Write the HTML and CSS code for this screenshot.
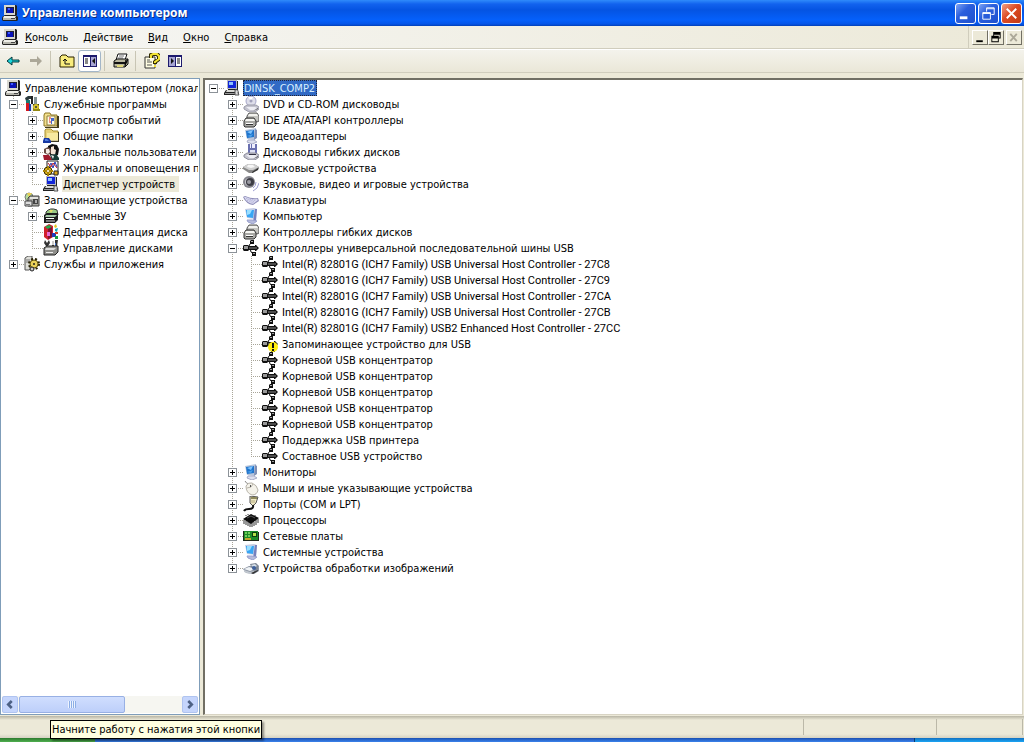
FILE: index.html
```html
<!DOCTYPE html>
<html lang="ru">
<head>
<meta charset="utf-8">
<title>Управление компьютером</title>
<link rel="stylesheet" href="styles.css">
</head>
<body>
<svg class="sprite" aria-hidden="true">
<symbol id="pc" viewBox="0 0 16 16"><path d="M2 0h12l1 1v9l-1 1H3l-1-1z" fill="#222"/><path d="M2 0h11v10H2z" fill="#d8d8d0"/><path d="M4 2h8v6H4z" fill="#223"/><path d="M5 3h6v5H5z" fill="#0a12b8"/><path d="M6 3h2v2H6z" fill="#3c5cff"/><path d="M1 11h14l1 1v3l-1 1H1l-1-1v-2z" fill="#222"/><path d="M2 11h12l-1 2H1z" fill="#eeeee8"/><path d="M1 13h13v2H1z" fill="#b4b4ac"/><path d="M9 13h4v1H9z" fill="#444"/></symbol>
<symbol id="dev" viewBox="0 0 16 16"><path d="M3 0h10v9H3z" fill="#b8b8c0"/><path d="M13 1h1v9H4V9h9z" fill="#222"/><path d="M4 1h8v7H4z" fill="#1226d8"/><path d="M5 2h4v3H5z" fill="#8fc0ff"/><path d="M2 10h11l2 3v2H0v-2z" fill="#222"/><path d="M3 10h9l1 2H2z" fill="#d8d8d4"/><path d="M1 13h10v1H1z" fill="#999"/><path d="M11 10q4-1 3 3l1 2h-4z" fill="#ddd" stroke="#555"/></symbol>
<symbol id="tools" viewBox="0 0 16 16"><path d="M1 2l3-2h5v3H5L4 5H2z" fill="#2b3a3c"/><path d="M2 4h4v5H2z" fill="#177a76"/><path d="M7 0h2v8H7z" fill="#222"/><path d="M10 1h3v7h-3z" fill="#839296"/><path d="M2 7h3v8H2z" fill="#d41820"/><path d="M5 8h3v7H5z" fill="#1540ad"/><path d="M7 8h2v7H7z" fill="#e6e6e6"/><path d="M9 8h6v7H9z" fill="#312e08"/><circle cx="12" cy="11" r="3" fill="#d9c52d"/><circle cx="12" cy="11" r="1" fill="#333"/><path d="M9 13h7v2H9z" fill="#958a13"/></symbol>
<symbol id="log" viewBox="0 0 16 16"><path d="M1 3l1-2h5l1 2h6v11H1z" fill="#f3e08d" stroke="#8c7423"/><path d="M4 4h8v9H4z" fill="#fffbe5" stroke="#8e7f3c"/><path d="M6 6h2M6 8h1M6 10h2" stroke="#d22"/><path d="M8 6h3v3H9v3H8z" fill="#46c"/><path d="M14 4h2v12H2v-1h12z" fill="#423a1a"/></symbol>
<symbol id="folder" viewBox="0 0 16 16"><path d="M2 2l1-1h5l2 2h5v9H2z" fill="#e7d179" stroke="#a8902f"/><path d="M4 5h11v7H4z" fill="#f7e99f"/><path d="M15 4h1v10H7v-1h8z" fill="#3d3924"/><path d="M1 10h5l2 3v2H0v-2z" fill="#1838a2"/><path d="M2 11h2l2 2H2z" fill="#4f7ddf"/></symbol>
<symbol id="users" viewBox="0 0 16 16"><path d="M5 2l4-2 5 1 2 4-1 6-5 2-5-4z" fill="#101010"/><path d="M8 3l3-1v3l2 1-1 5-4-1z" fill="#f4e3d4"/><path d="M1 5l4-2 3 2v4l-3 2-4-2z" fill="#6a4c43"/><path d="M3 5h3l1 3-2 2-2-1z" fill="#f6ece3"/><path d="M0 11h6l4 5H1z" fill="#9f1a2b"/><path d="M7 11l6-1 3 4v2H9z" fill="#173b35"/><path d="M8 11l3 1-1 3z" fill="#eee"/></symbol>
<symbol id="perf" viewBox="0 0 16 16"><path d="M4 1h11v13H4z" fill="#fff" stroke="#222"/><path d="M5 9l3-6 2 5 2-6 2 5" fill="none" stroke="#243bbc"/><path d="M5 3l3 4 2-4 4 5" fill="none" stroke="#c21f2b"/><circle cx="5" cy="11" r="4" fill="#ddb51e" stroke="#332800"/><path d="M4 6h2v10H4zM0 10h10v2H0z" fill="#a88308"/><circle cx="5" cy="11" r="1" fill="#fff"/><path d="M11 11h4v4h-4z" fill="#d9a51a" stroke="#222"/></symbol>
<symbol id="storage" viewBox="0 0 16 16"><circle cx="5" cy="5" r="4" fill="#b5db9a" stroke="#777"/><path d="M5 5L3 1h5z" fill="#e7ce51"/><path d="M4 6l2-2h9v10H4z" fill="#a7a7a2" stroke="#444"/><path d="M6 5h8v2H6z" fill="#e3e3df"/><path d="M9 7h5v5H9z" fill="#444"/><path d="M11 8h2v3h-2z" fill="#aaa"/><path d="M1 9h7v5H1z" fill="#ddd" stroke="#444"/><path d="M2 12h4v1H2z" fill="#777"/></symbol>
<symbol id="removable" viewBox="0 0 16 16"><path d="M3 4q4-5 11-2l1 5H3z" fill="#99c984" stroke="#333"/><path d="M6 2h4L8 5z" fill="#e4df6a"/><path d="M1 7l3-2h11v7l-3 3H1z" fill="#1c1c1c"/><path d="M3 7h11l-2 2H2z" fill="#a5c9a6"/><path d="M3 10h8v1H3z" fill="#fff"/><path d="M3 12h9v2H3z" fill="#777"/></symbol>
<symbol id="defrag" viewBox="0 0 16 16"><path d="M1 3l5-3 4 2v11l-5 3-4-3z" fill="#d11e2c"/><path d="M2 3l4-2 3 2-4 2z" fill="#21ab49"/><path d="M5 5l4-2v10l-4 2z" fill="#7b1230"/><path d="M4 8h3v4H4z" fill="#e869d3"/><path d="M11 2l2-2 1 3-2 1z" fill="#e2c51a"/><path d="M12 5l3-1-1 4-2-1z" fill="#1ab"/><path d="M9 9h4v4H9z" fill="#243bbb"/><path d="M12 12h3v3h-3z" fill="#1a9d3f"/><path d="M12 8h3v2h-3z" fill="#c42"/></symbol>
<symbol id="diskmgmt" viewBox="0 0 16 16"><path d="M2 0l2 3 2-3 1 3-2 3H3L1 3zM9 1h2v7H9zM12 0h3l-1 7h-2z" fill="#333"/><path d="M9 1h2v4H9z" fill="#ccc"/><path d="M12 3h1v4h-1z" fill="#3b68bb"/><path d="M1 8l3-2h11v6l-3 3H1z" fill="#8e8e8a" stroke="#222"/><path d="M3 8h10l-2 2H2z" fill="#ddd"/><path d="M3 12h7v1H3z" fill="#eee"/></symbol>
<symbol id="services" viewBox="0 0 16 16"><path d="M1 2l3-2h4v12l-3 2H1z" fill="#deded8" stroke="#555"/><path d="M2 4h4M2 6h4" stroke="#777"/><circle cx="10" cy="8" r="5" fill="none" stroke="#282205" stroke-width="2" stroke-dasharray="2 2"/><circle cx="10" cy="8" r="4" fill="#ead25a" stroke="#5f5210"/><circle cx="10" cy="8" r="1" fill="#222"/><circle cx="8" cy="13" r="2" fill="#ccc" stroke="#222"/></symbol>
<symbol id="dvd" viewBox="0 0 16 16"><circle cx="8" cy="5" r="5" fill="#dedeea" stroke="#a6a6c8"/><path d="M8 5L5 1h5z" fill="#fff"/><circle cx="8" cy="5" r="1" fill="#fff" stroke="#8686a8"/><path d="M1 11l3-2h9l3 2v2l-4 3H6l-5-3z" fill="#c4c4cf" stroke="#9a9aa8"/><path d="M3 11h9l2 1-3 2H7z" fill="#eeeef4"/><path d="M10 15l5-3v1z" fill="#555"/></symbol>
<symbol id="ctrl" viewBox="0 0 16 16"><path d="M4 4l2-3h8l2 3v5l-2 1H4z" fill="#c4c4c0" stroke="#555"/><path d="M6 2h8l1 2H5z" fill="#f2f2ee"/><path d="M1 9l2-3h8l2 3v4l-2 2H2l-1-1z" fill="#a8a8a4" stroke="#333"/><path d="M3 7h8l1 2H2z" fill="#f6f6f2"/><path d="M3 11h7v1H3z" fill="#fff"/><path d="M3 12h7v1H3z" fill="#333"/></symbol>
<symbol id="mon" viewBox="0 0 16 16"><path d="M2 2l11-2 1 9-3 3-7-1z" fill="#b8c6dc"/><path d="M3 3l8-1v7l-7 1z" fill="#1f74cc"/><path d="M4 4l6-2-2 4z" fill="#7ec4ff"/><path d="M4 8l4 1 2-3z" fill="#4aa0ea"/><path d="M12 1l2 1v8l-3 2z" fill="#7f8fb4"/><path d="M5 12h6l3 2-5 2-5-2z" fill="#dcdfee" stroke="#a9adc8"/></symbol>
<symbol id="comp" viewBox="0 0 16 16"><path d="M2 1l9-1 3 1-1 10-9-1z" fill="#c3cce4"/><path d="M3 2l8 0-1 8-6-1z" fill="#38a6f4"/><path d="M4 2h5l-2 4-3 1z" fill="#9adfff"/><path d="M12 1l2 0-1 12-3 1z" fill="#7681bd"/><path d="M4 12h5l5 1-4 3-5-2z" fill="#b6bbdc" stroke="#9aa0cc"/></symbol>
<symbol id="floppy" viewBox="0 0 16 16"><path d="M5 0h9v11H5z" fill="#6a70b0"/><path d="M7 0h1v4H7zM9 0h3v4H9z" fill="#eef"/><path d="M7 6h5v4H7z" fill="#dde0f4"/><path d="M1 11l3-2h9l3 2v2l-4 3H6l-5-3z" fill="#c4c4cf" stroke="#8c8c9a"/><path d="M3 11h9l2 1-3 2H7z" fill="#eeeef4"/><path d="M6 10h7v1H6z" fill="#334"/><path d="M10 15l5-3v1z" fill="#444"/></symbol>
<symbol id="disk" viewBox="0 0 16 16"><path d="M0 7l5-3h6l5 3v2l-6 4H6L0 9z" fill="#8a8a8a"/><path d="M0 7l5-3h6l5 3-6 3H6z" fill="#d0d0d0"/><path d="M5 5h5l2 2-4 1-4-1z" fill="#f6f6f6"/><path d="M9 12l6-4v2l-6 3z" fill="#333"/></symbol>
<symbol id="sound" viewBox="0 0 16 16"><circle cx="6" cy="6" r="6" fill="#85858d"/><circle cx="6" cy="6" r="4" fill="#c8c8d0"/><circle cx="7" cy="6" r="4" fill="#3d3d45"/><circle cx="6" cy="6" r="2" fill="#9a9aa2"/><path d="M10 12q3-2 3-6M10 15q5-2 6-8" fill="none" stroke="#a1a1d2"/></symbol>
<symbol id="kbd" viewBox="0 0 16 16"><path d="M0 5l2-1q7 3 13 2l1 3-6 4q-7-1-10-8z" fill="#8e8db8"/><path d="M1 5l2 0q6 3 11 2l1 1-5 4q-6-1-9-7z" fill="#dadaf0"/><path d="M3 6l8 4M4 8l6 3M7 7l6 2" stroke="#a9a9d2" stroke-dasharray="1 1"/></symbol>
<symbol id="usb" viewBox="0 0 16 16"><path d="M5 8l2-4 2-2M7 8l1 4 3 2" fill="none" stroke="#111"/><path d="M0 6l1-1h4l1 1h6V5h1l3 3-3 3h-1V10H6l-1 1H1l-1-1z" fill="#111"/><path d="M1 6h4v3H1z" fill="#999"/><path d="M6 8h8" stroke="#8a8a8a"/><path d="M7 1l1-1h3v4H8L7 3z" fill="#111"/><path d="M8 1h2v1H8z" fill="#aaa"/><path d="M9 12h4v4H9z" fill="#111"/><path d="M10 13h2v1h-2z" fill="#999"/></symbol>
<symbol id="usbwarn" viewBox="0 0 16 16"><use href="#usb"/><circle cx="11" cy="11" r="5" fill="#ffee12"/><path d="M10 7h2v5h-2zM10 13h2v2h-2z" fill="#111"/></symbol>
<symbol id="mouse" viewBox="0 0 16 16"><path d="M2 1q1 3 5 3" fill="none" stroke="#8b8b88"/><path d="M3 6q2-4 6-3 5 2 6 7-1 5-6 5-6-2-6-9z" fill="#f4f2ea" stroke="#b6b2a8"/><path d="M4 8q5 0 6-4" fill="none" stroke="#b6b2a8"/><path d="M7 5h1v2H7z" fill="#555"/></symbol>
<symbol id="port" viewBox="0 0 16 16"><path d="M7 0l8 1-2 6-3 3-3-3z" fill="#efe8c4" stroke="#555"/><path d="M8 1h6v2H8z" fill="#8f8a5b"/><path d="M9 4v3M11 4v3" stroke="#b5ad80"/><path d="M10 9q1 4-4 4-4 0-5 2" fill="none" stroke="#111" stroke-width="2"/></symbol>
<symbol id="cpu" viewBox="0 0 16 16"><path d="M1 8v4M3 9v4M5 10v4M7 11v4M9 11v4M11 10v4M13 8v5M15 7v4" stroke="#333"/><path d="M0 7l8-5 8 4-8 6z" fill="#0c0c0c"/><path d="M4 6l4-2 4 2" fill="none" stroke="#555"/><path d="M3 4v-1M5 3V2M12 4V3" stroke="#333"/></symbol>
<symbol id="net" viewBox="0 0 16 16"><path d="M1 3h14v9H1z" fill="#1d8a28"/><path d="M0 3h1v10H0zM15 4h1v9h-1zM1 12h14v1H1z" fill="#1f2a1c"/><path d="M2 4h2v2H2zM5 4h2v2H5zM2 7h2v2H2zM5 7h2v2H5z" fill="#6fcf58"/><path d="M9 4h5v5H9z" fill="#0c4010"/><path d="M10 5h3v3h-3z" fill="#b8e24a"/><path d="M2 10h6v2H2z" fill="#c2a62c"/></symbol>
<symbol id="cam" viewBox="0 0 16 16"><path d="M0 9l6-3h9l1 2v3l-5 3-8-1z" fill="#8e97a5"/><path d="M7 4l6-1 3 3-2 5-5-2z" fill="#7c8592"/><path d="M8 5l4-1 2 2-3 2z" fill="#d8e0e8"/><path d="M1 9l5-2 6 2-5 2z" fill="#f0f3f6"/><path d="M1 10l6 2 4-1v2l-4 1-6-2z" fill="#c2c8d0"/><circle cx="11" cy="8" r="2" fill="#3d5f9a"/><path d="M8 13l7-3v1l-5 3z" fill="#333"/></symbol>
</svg>

<div class="window">
  <header class="titlebar">
    <svg class="icon"><use href="#pc"/></svg>
    <h1>Управление компьютером</h1>
    <button class="cap" aria-label="Свернуть"><svg viewBox="0 0 20 20"><path d="M4 13h8v3H4z" fill="#fff"/></svg></button>
    <button class="cap" aria-label="Восстановить"><svg viewBox="0 0 20 20"><path d="M8 8V4h8v7h-3M8 5h8M4 9h8v7H4zM4 10h8" fill="none" stroke="#fff"/></svg></button>
    <button class="cap close" aria-label="Закрыть"><svg viewBox="0 0 20 20"><path d="M5 5l10 10M15 5L5 15" stroke="#fff" stroke-width="2"/></svg></button>
  </header>

  <nav class="menubar">
    <svg class="icon"><use href="#pc"/></svg>
    <button class="menu"><u>К</u>онсоль</button>
    <button class="menu"><u>Д</u>ействие</button>
    <button class="menu"><u>В</u>ид</button>
    <button class="menu"><u>О</u>кно</button>
    <button class="menu"><u>С</u>правка</button>
    <div class="mdi">
      <button aria-label="Свернуть окно"><svg viewBox="0 0 14 14"><path d="M3 10h7v2H3z"/></svg></button>
      <button aria-label="Восстановить окно"><svg viewBox="0 0 14 14"><path d="M4 1h8v7h-2V7h1V4H5v1H4zM2 5h8v7H2zM3 8v3h6V8z" fill-rule="evenodd"/></svg></button>
      <button class="off" aria-label="Закрыть окно" disabled><svg viewBox="0 0 14 14"><path d="M3 3l7 8M10 3l-7 8" stroke="#aca899" stroke-width="2"/></svg></button>
    </div>
  </nav>

  <div class="toolbar">
    <button class="tool" aria-label="Назад"><svg class="icon" viewBox="0 0 16 16"><path d="M2 8l5-4v3h7v2H7v3z" fill="#19d6dc" stroke="#06383b"/></svg></button>
    <button class="tool" aria-label="Вперед"><svg class="icon" viewBox="0 0 16 16"><path d="M14 8L9 3v3H2v3h7v4z" fill="#aca899"/></svg></button>
    <span class="sep"></span>
    <button class="tool" aria-label="Вверх"><svg class="icon" viewBox="0 0 16 16"><path d="M1 4l2-2h4l2 2h6v10H1z" fill="#f8ec7d" stroke="#292100"/><path d="M6 6v5h5M4 8l2-2 2 2" fill="none" stroke="#111"/></svg></button>
    <button class="tool pressed" aria-label="Дерево консоли" aria-pressed="true"><svg class="icon" viewBox="0 0 16 16"><path d="M1 2h14v12H1z" fill="#1d1a6d"/><path d="M2 4h6v9H2z" fill="#fff"/><path d="M9 4h5v9H9z" fill="#a7a5d2"/><path d="M3 6h3M3 8h3M3 10h3" stroke="#111"/><path d="M10 8l3-3v6z" fill="#111"/></svg></button>
    <span class="sep"></span>
    <button class="tool" aria-label="Печать"><svg class="icon" viewBox="0 0 16 16"><path d="M5 1h9l-2 6H3z" fill="#fff" stroke="#111"/><path d="M6 3h5M5 5h5" stroke="#777"/><path d="M1 8l3-2h11v5l-3 3H1z" fill="#b7b59e" stroke="#111"/><path d="M1 9h11v2H1z" fill="#111"/><path d="M4 12h6v2H4z" fill="#e0d878"/><path d="M12 8l3-2M12 14V9l3-2" stroke="#111"/></svg></button>
    <span class="sep"></span>
    <button class="tool" aria-label="Справка"><svg class="icon" viewBox="0 0 16 16"><path d="M1 4h10v11H1z" fill="#fffde2" stroke="#333"/><path d="M3 7h3M3 9h5M3 12h5" stroke="#555"/><path d="M7 5V2l2-1h4l2 2v3l-4 3v2" fill="none" stroke="#322c00" stroke-width="4"/><path d="M7 5V2l2-1h4l2 2v3l-4 3v1M10 13h2" fill="none" stroke="#f4e535" stroke-width="2"/></svg></button>
    <button class="tool" aria-label="Панель действий"><svg class="icon" viewBox="0 0 16 16"><path d="M1 2h14v12H1z" fill="#1d1a6d"/><path d="M2 4h6v9H2z" fill="#a7a5d2"/><path d="M9 4h5v9H9z" fill="#fff"/><path d="M10 6h3M10 8h3M10 10h3" stroke="#111"/><path d="M7 8L4 5v6z" fill="#111"/></svg></button>
  </div>

  <main class="panes">
    <section class="pane console">
      <ul class="tree">
        <li class="root"><div class="row"><svg class="icon"><use href="#pc"/></svg><span class="label">Управление компьютером (локаль</span></div>
          <ul class="flat">
            <li><div class="row"><span class="cell"><button class="toggle minus" aria-label="Свернуть"></button></span><svg class="icon"><use href="#tools"/></svg><span class="label">Служебные программы</span></div>
              <ul>
                <li><div class="row"><span class="cell"><button class="toggle" aria-label="Развернуть"></button></span><svg class="icon"><use href="#log"/></svg><span class="label">Просмотр событий</span></div></li>
                <li><div class="row"><span class="cell"><button class="toggle" aria-label="Развернуть"></button></span><svg class="icon"><use href="#folder"/></svg><span class="label">Общие папки</span></div></li>
                <li><div class="row"><span class="cell"><button class="toggle" aria-label="Развернуть"></button></span><svg class="icon"><use href="#users"/></svg><span class="label">Локальные пользователи</span></div></li>
                <li><div class="row"><span class="cell"><button class="toggle" aria-label="Развернуть"></button></span><svg class="icon"><use href="#perf"/></svg><span class="label">Журналы и оповещения пр</span></div></li>
                <li><div class="row"><span class="cell"></span><svg class="icon"><use href="#dev"/></svg><span class="label current">Диспетчер устройств</span></div></li>
              </ul></li>
            <li><div class="row"><span class="cell"><button class="toggle minus" aria-label="Свернуть"></button></span><svg class="icon"><use href="#storage"/></svg><span class="label">Запоминающие устройства</span></div>
              <ul>
                <li><div class="row"><span class="cell"><button class="toggle" aria-label="Развернуть"></button></span><svg class="icon"><use href="#removable"/></svg><span class="label">Съемные ЗУ</span></div></li>
                <li><div class="row"><span class="cell"></span><svg class="icon"><use href="#defrag"/></svg><span class="label">Дефрагментация диска</span></div></li>
                <li><div class="row"><span class="cell"></span><svg class="icon"><use href="#diskmgmt"/></svg><span class="label">Управление дисками</span></div></li>
              </ul></li>
            <li><div class="row"><span class="cell"><button class="toggle" aria-label="Развернуть"></button></span><svg class="icon"><use href="#services"/></svg><span class="label">Службы и приложения</span></div></li>
          </ul></li>
      </ul>
      <div class="scrollbar">
        <button class="arrow" aria-label="Влево"><svg viewBox="0 0 16 16"><path d="M10 4L6 8l4 4" fill="none" stroke="#4d6185" stroke-width="3"/></svg></button>
        <div class="track"><div class="thumb"><span class="grip"></span></div></div>
        <button class="arrow" aria-label="Вправо"><svg viewBox="0 0 16 16"><path d="M6 4l4 4-4 4" fill="none" stroke="#4d6185" stroke-width="3"/></svg></button>
      </div>
    </section>

    <section class="pane devices">
      <ul class="tree">
        <li class="root"><div class="row"><span class="cell"><button class="toggle minus" aria-label="Свернуть"></button></span><svg class="icon"><use href="#dev"/></svg><span class="label selected">DINSK_COMP2</span></div>
          <ul>
            <li><div class="row"><span class="cell"><button class="toggle" aria-label="Развернуть"></button></span><svg class="icon"><use href="#dvd"/></svg><span class="label">DVD и CD-ROM дисководы</span></div></li>
            <li><div class="row"><span class="cell"><button class="toggle" aria-label="Развернуть"></button></span><svg class="icon"><use href="#ctrl"/></svg><span class="label">IDE ATA/ATAPI контроллеры</span></div></li>
            <li><div class="row"><span class="cell"><button class="toggle" aria-label="Развернуть"></button></span><svg class="icon"><use href="#mon"/></svg><span class="label">Видеоадаптеры</span></div></li>
            <li><div class="row"><span class="cell"><button class="toggle" aria-label="Развернуть"></button></span><svg class="icon"><use href="#floppy"/></svg><span class="label">Дисководы гибких дисков</span></div></li>
            <li><div class="row"><span class="cell"><button class="toggle" aria-label="Развернуть"></button></span><svg class="icon"><use href="#disk"/></svg><span class="label">Дисковые устройства</span></div></li>
            <li><div class="row"><span class="cell"><button class="toggle" aria-label="Развернуть"></button></span><svg class="icon"><use href="#sound"/></svg><span class="label">Звуковые, видео и игровые устройства</span></div></li>
            <li><div class="row"><span class="cell"><button class="toggle" aria-label="Развернуть"></button></span><svg class="icon"><use href="#kbd"/></svg><span class="label">Клавиатуры</span></div></li>
            <li><div class="row"><span class="cell"><button class="toggle" aria-label="Развернуть"></button></span><svg class="icon"><use href="#comp"/></svg><span class="label">Компьютер</span></div></li>
            <li><div class="row"><span class="cell"><button class="toggle" aria-label="Развернуть"></button></span><svg class="icon"><use href="#ctrl"/></svg><span class="label">Контроллеры гибких дисков</span></div></li>
            <li><div class="row"><span class="cell"><button class="toggle minus" aria-label="Свернуть"></button></span><svg class="icon"><use href="#usb"/></svg><span class="label">Контроллеры универсальной последовательной шины USB</span></div>
              <ul>
                <li><div class="row"><span class="cell"></span><svg class="icon"><use href="#usb"/></svg><span class="label latin">Intel(R) 82801G (ICH7 Family) USB Universal Host Controller - 27C8</span></div></li>
                <li><div class="row"><span class="cell"></span><svg class="icon"><use href="#usb"/></svg><span class="label latin">Intel(R) 82801G (ICH7 Family) USB Universal Host Controller - 27C9</span></div></li>
                <li><div class="row"><span class="cell"></span><svg class="icon"><use href="#usb"/></svg><span class="label latin">Intel(R) 82801G (ICH7 Family) USB Universal Host Controller - 27CA</span></div></li>
                <li><div class="row"><span class="cell"></span><svg class="icon"><use href="#usb"/></svg><span class="label latin">Intel(R) 82801G (ICH7 Family) USB Universal Host Controller - 27CB</span></div></li>
                <li><div class="row"><span class="cell"></span><svg class="icon"><use href="#usb"/></svg><span class="label latin">Intel(R) 82801G (ICH7 Family) USB2 Enhanced Host Controller - 27CC</span></div></li>
                <li><div class="row"><span class="cell"></span><svg class="icon"><use href="#usbwarn"/></svg><span class="label">Запоминающее устройство для USB</span></div></li>
                <li><div class="row"><span class="cell"></span><svg class="icon"><use href="#usb"/></svg><span class="label">Корневой USB концентратор</span></div></li>
                <li><div class="row"><span class="cell"></span><svg class="icon"><use href="#usb"/></svg><span class="label">Корневой USB концентратор</span></div></li>
                <li><div class="row"><span class="cell"></span><svg class="icon"><use href="#usb"/></svg><span class="label">Корневой USB концентратор</span></div></li>
                <li><div class="row"><span class="cell"></span><svg class="icon"><use href="#usb"/></svg><span class="label">Корневой USB концентратор</span></div></li>
                <li><div class="row"><span class="cell"></span><svg class="icon"><use href="#usb"/></svg><span class="label">Корневой USB концентратор</span></div></li>
                <li><div class="row"><span class="cell"></span><svg class="icon"><use href="#usb"/></svg><span class="label">Поддержка USB принтера</span></div></li>
                <li><div class="row"><span class="cell"></span><svg class="icon"><use href="#usb"/></svg><span class="label">Составное USB устройство</span></div></li>
              </ul></li>
            <li><div class="row"><span class="cell"><button class="toggle" aria-label="Развернуть"></button></span><svg class="icon"><use href="#mon"/></svg><span class="label">Мониторы</span></div></li>
            <li><div class="row"><span class="cell"><button class="toggle" aria-label="Развернуть"></button></span><svg class="icon"><use href="#mouse"/></svg><span class="label">Мыши и иные указывающие устройства</span></div></li>
            <li><div class="row"><span class="cell"><button class="toggle" aria-label="Развернуть"></button></span><svg class="icon"><use href="#port"/></svg><span class="label">Порты (COM и LPT)</span></div></li>
            <li><div class="row"><span class="cell"><button class="toggle" aria-label="Развернуть"></button></span><svg class="icon"><use href="#cpu"/></svg><span class="label">Процессоры</span></div></li>
            <li><div class="row"><span class="cell"><button class="toggle" aria-label="Развернуть"></button></span><svg class="icon"><use href="#net"/></svg><span class="label">Сетевые платы</span></div></li>
            <li><div class="row"><span class="cell"><button class="toggle" aria-label="Развернуть"></button></span><svg class="icon"><use href="#comp"/></svg><span class="label">Системные устройства</span></div></li>
            <li><div class="row"><span class="cell"><button class="toggle" aria-label="Развернуть"></button></span><svg class="icon"><use href="#cam"/></svg><span class="label">Устройства обработки изображений</span></div></li>
          </ul></li>
      </ul>
    </section>
  </main>

  <footer class="status"><span class="main"></span><span class="part"></span><span class="part narrow"></span></footer>
</div>
<div class="taskbar"><span class="start"></span><span class="tasks"></span><span class="tray"></span></div>
<div class="tooltip" role="tooltip">Начните работу с нажатия этой кнопки</div>
</body>
</html>
```
FILE: styles.css
```css
* { box-sizing: border-box; }
body {
  margin: 0;
  height: 100vh;
  display: flex;
  flex-direction: column;
  overflow: hidden;
  font: 11px/16px "DejaVu Sans Condensed", "DejaVu Sans", sans-serif;
  color: #000;
  background: #ece9d8;
}
button { font: inherit; color: inherit; margin: 0; padding: 0; border: 0; background: none; }
.sprite { display: none; }
.icon { width: 16px; height: 16px; flex: none; display: block; }

.window { flex: 1; min-height: 0; display: flex; flex-direction: column; }

.titlebar {
  height: 26px;
  flex: none;
  display: flex;
  align-items: center;
  gap: 2px;
  padding: 0 2px;
  background: linear-gradient(#2f8bfb 0, #1263ee 4px, #0554e2 10px, #0560fb 20px, #0555e8 24px, #0340b5 26px);
}
.titlebar h1 {
  flex: 1;
  margin: 0;
  padding-left: 2px;
  font: bold 12px/20px "Noto Sans", sans-serif;
  color: #fff;
  text-shadow: 1px 1px #0a2a80;
}
.cap {
  width: 21px;
  height: 21px;
  border: 1px solid #fff;
  border-radius: 3px;
  background: linear-gradient(135deg, #7ea4f5, #2b5fdd 40%, #1e50cd);
}
.cap.close { background: linear-gradient(135deg, #f0a088, #dd4a22 45%, #c03a14); }
.cap svg { display: block; width: 19px; height: 19px; }

.menubar {
  height: 23px;
  flex: none;
  display: flex;
  align-items: center;
  gap: 15px;
  padding: 0 0 0 2px;
  background: linear-gradient(90deg, #f6f6f4, #ece9d8);
  border-bottom: 1px solid #d0cdbd;
}
.menubar .icon { margin-right: -8px; }
.menu { padding-top: 1px; }
.mdi { margin-left: auto; align-self: stretch; display: flex; align-items: center; padding: 0 2px 0 3px; border-left: 1px solid #d0cdbd; }
.mdi button {
  width: 16px;
  height: 15px;
  background: #ece9d8;
  border: 1px solid;
  border-color: #fff #716f64 #716f64 #fff;
}
.mdi svg { display: block; width: 14px; height: 13px; }
.mdi .off { margin-left: 2px; }

.toolbar {
  height: 24px;
  flex: none;
  display: flex;
  align-items: center;
  padding-left: 1px;
  background: linear-gradient(#f4f3ec, #eae7d8);
  border-top: 1px solid #fff;
  border-bottom: 1px solid #d0cdbd;
}
.tool { width: 23px; height: 22px; display: grid; place-items: center; }
.tool.pressed { border: 1px solid #a3b6c8; border-radius: 3px; background: #fff; }
.sep { width: 1px; height: 20px; margin: 0 4px 0 3px; background: #c8c5b4; }

.panes { flex: 1; min-height: 0; display: flex; gap: 3px; padding: 5px 1px 1px 0; }
.pane { background: #fff; min-width: 0; overflow: hidden; }
.console {
  width: 200px;
  flex: none;
  display: flex;
  flex-direction: column;
  border: 1px solid #7f9db9;
  padding: 1px;
}
.console .tree { flex: 1; padding-left: 3px; overflow: hidden; }
.devices { flex: 1; border: 1px solid #d8d4c4; border-top: 2px solid #716f64; border-left: 2px solid #716f64; }

.tree, .tree ul { list-style: none; margin: 0; padding: 0; }
.tree ul { margin-left: 19px; }
.tree ul.flat { margin-left: 0; }
.tree li {
  background: repeating-linear-gradient(#a8a598 0 1px, transparent 1px 2px) 8px 0 / 1px 100% no-repeat;
}
.tree li:last-child { background-size: 1px 8px; }
.tree li.root { background: none; }
.row { display: flex; height: 16px; align-items: center; white-space: nowrap; }
.cell {
  width: 19px;
  height: 16px;
  flex: none;
  display: flex;
  align-items: center;
  padding-left: 4px;
  background: repeating-linear-gradient(90deg, #a8a598 0 1px, transparent 1px 2px) 8px 8px / 11px 1px no-repeat;
}
.toggle {
  width: 9px;
  height: 9px;
  border: 1px solid #8c9298;
  background:
    linear-gradient(#000, #000) 1px 3px / 5px 1px no-repeat,
    linear-gradient(#000, #000) 3px 1px / 1px 5px no-repeat,
    #fff;
}
.toggle.minus { background: linear-gradient(#000, #000) 1px 3px / 5px 1px no-repeat, #fff; }
.label { height: 16px; margin-left: 3px; padding: 1px 2px 0 1px; line-height: 16px; }
.latin { font-family: Roboto, sans-serif; }
.current { background: #ece9d8; padding-right: 4px; }
.selected { background: #316ac5; color: #d8f0ff; outline: 1px dotted #223; outline-offset: -1px; }

.scrollbar { flex: none; height: 17px; display: flex; background: #f6f6f1; }
.arrow {
  width: 16px;
  flex: none;
  border: 1px solid #b0c4f0;
  border-radius: 2px;
  background: #c5d5fc;
}
.arrow svg { display: block; width: 14px; height: 15px; }
.track { flex: 1; display: flex; padding-left: 1px; }
.thumb {
  width: 65%;
  display: grid;
  place-items: center;
  border: 1px solid #98b0e4;
  border-radius: 2px;
  background: linear-gradient(#d0defe, #bdcffa);
}
.grip { width: 8px; height: 7px; background: repeating-linear-gradient(90deg, #eef4fe 0 1px, #8caee6 1px 2px); }

.status {
  height: 22px;
  flex: none;
  display: flex;
  padding: 3px 1px 3px 0;
  background: linear-gradient(#b8b5a5 0, #ece9d8 4px, #ece9d8 18px, #d5d2c2 22px);
}
.status .main { flex: 1; }
.status span { border-right: 1px solid #bbb8a8; }
.status .part { width: 133px; }
.status .narrow { width: 86px; }

.taskbar { height: 4px; flex: none; display: flex; }
.start { width: 95px; background: linear-gradient(#2c7a2e, #4fb04f); }
.tasks { flex: 1; background: linear-gradient(#1c4fb0, #3a83ec); }
.tray { width: 110px; background: linear-gradient(#1270c0, #1ba5f4); border-left: 1px solid #0a3a70; }

.tooltip {
  position: absolute;
  left: 50px;
  bottom: 3px;
  padding: 1px 1px 0;
  border: 1px solid #000;
  background: #ffffe1;
  box-shadow: 2px 2px 2px rgba(0, 0, 0, .4);
  white-space: nowrap;
}
```
